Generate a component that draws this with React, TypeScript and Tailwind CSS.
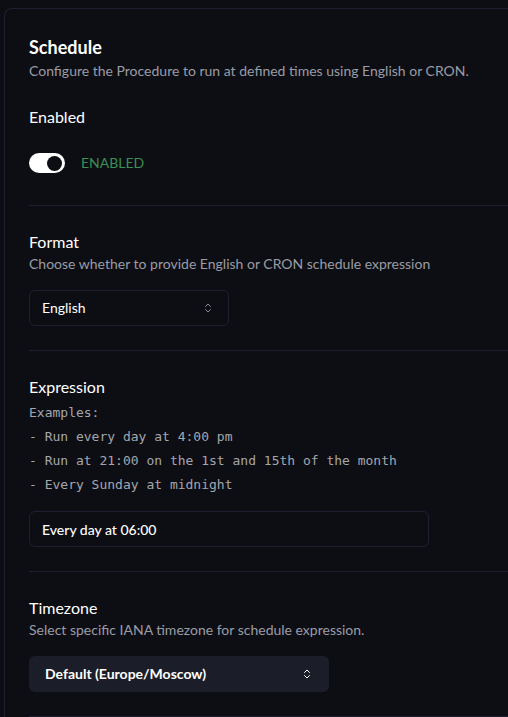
import React, { useState } from 'react';
import { ChevronsUpDown } from 'lucide-react';

const examples = [
  'Examples:',
  '- Run every day at 4:00 pm',
  '- Run at 21:00 on the 1st and 15th of the month',
  '- Every Sunday at midnight',
];

const App: React.FC = () => {
  const [enabled, setEnabled] = useState(true);
  const [format, setFormat] = useState('English');
  const [expression, setExpression] = useState('Every day at 06:00');

  return (
    <div
      className="min-h-screen bg-[#0d0e13] pt-2 pl-1 overflow-hidden"
      style={{ fontFamily: 'Lato, "Noto Sans", sans-serif' }}
    >
      <div className="w-[560px] rounded-tl-lg border-l border-t border-[#1d2030] bg-[#0d0e13] pl-6 pt-6">
        {/* Header */}
        <h1 className="text-lg leading-7 font-bold text-white">Schedule</h1>
        <p className="text-sm leading-5 text-[#9a9ca6]">
          Configure the Procedure to run at defined times using English or CRON.
        </p>

        {/* Enabled */}
        <div className="mt-6 mb-8">
          <div className="text-base leading-6 text-white">Enabled</div>
          <div className="mt-6 flex h-5 items-center gap-4">
            <button
              onClick={() => setEnabled(!enabled)}
              className={`flex h-5 w-9 items-center rounded-full px-[3px] ${
                enabled ? 'justify-end bg-white' : 'justify-start bg-[#2a2d3a]'
              }`}
            >
              <span className="h-[15px] w-[15px] rounded-full bg-[#0d0e13]" />
            </button>
            <span
              className={`text-sm leading-5 ${enabled ? 'text-[#3b8f52]' : 'text-[#9a9ca6]'}`}
            >
              {enabled ? 'ENABLED' : 'DISABLED'}
            </span>
          </div>
        </div>

        <div className="h-px bg-[#1d2030]" />

        {/* Format */}
        <div className="py-6">
          <div className="text-base leading-6 text-white">Format</div>
          <p className="text-sm leading-5 text-[#9a9ca6]">
            Choose whether to provide English or CRON schedule expression
          </p>
          <button
            onClick={() => setFormat(format === 'English' ? 'CRON' : 'English')}
            className="mt-4 flex h-9 w-[200px] items-center justify-between rounded-md border border-[#1d2030] pl-3 pr-3.5 text-sm text-white"
          >
            <span>{format}</span>
            <ChevronsUpDown className="h-3 w-3 text-[#8a8c96]" strokeWidth={2} />
          </button>
        </div>

        <div className="h-px bg-[#1d2030]" />

        {/* Expression */}
        <div className="py-6">
          <div className="text-base leading-6 text-white">Expression</div>
          <div
            className="mt-[2px] text-[13px] leading-6 text-[#a4a6ae]"
            style={{ fontFamily: '"DejaVu Sans Mono", "Liberation Mono", monospace' }}
          >
            {examples.map((line) => (
              <div key={line} className="whitespace-pre">
                {line}
              </div>
            ))}
          </div>
          <input
            value={expression}
            onChange={(e) => setExpression(e.target.value)}
            className="mt-[14px] block h-9 w-[400px] rounded-md border border-[#1d2030] bg-transparent px-3 text-sm font-medium text-white outline-none"
          />
        </div>

        <div className="h-px bg-[#1d2030]" />

        {/* Timezone */}
        <div className="py-6">
          <div className="text-base leading-6 text-white">Timezone</div>
          <p className="text-sm leading-5 text-[#9a9ca6]">
            Select specific IANA timezone for schedule expression.
          </p>
          <button className="mt-4 flex h-9 w-[300px] items-center justify-between rounded-md bg-[#1b1e29] pl-4 pr-4 text-sm font-bold text-white">
            <span>Default (Europe/Moscow)</span>
            <ChevronsUpDown className="h-3 w-3 text-white" strokeWidth={2} />
          </button>
        </div>

        <div className="h-px bg-[#1d2030]" />
      </div>
    </div>
  );
};

export default App;
